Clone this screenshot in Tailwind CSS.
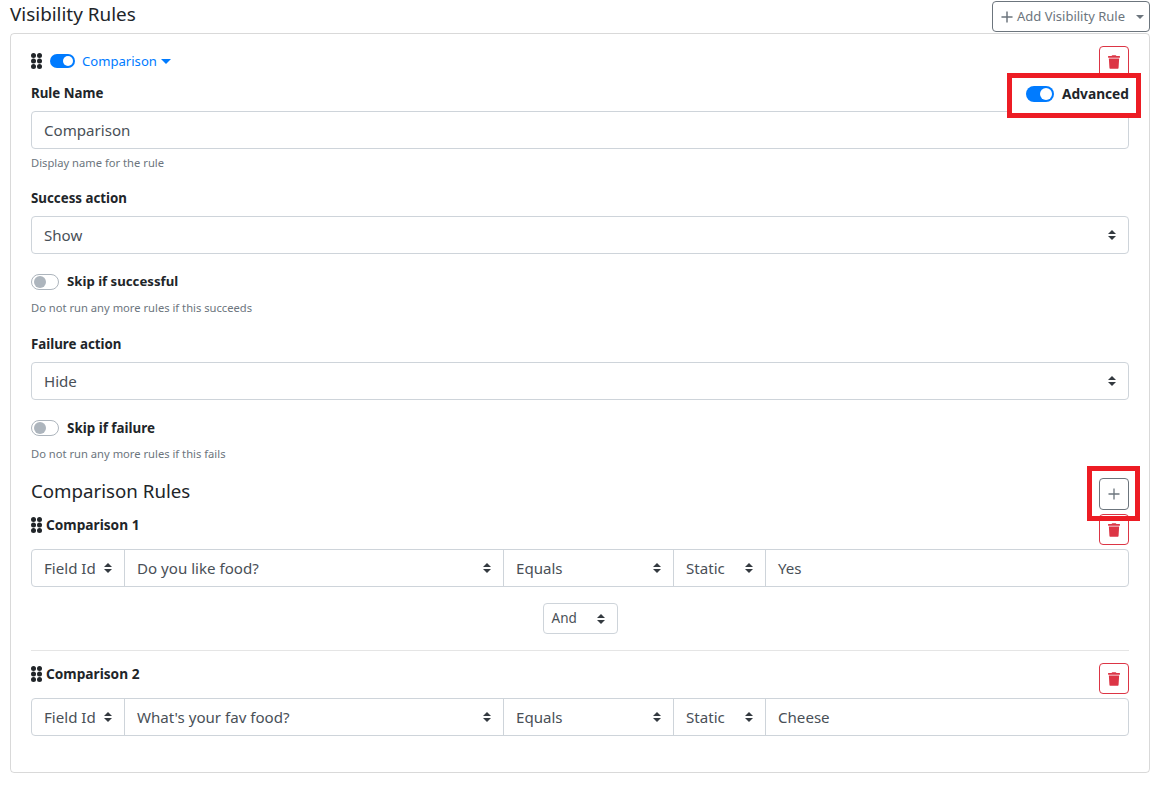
<!DOCTYPE html>
<html lang="en">
<head>
  <meta charset="UTF-8">
  <title>Visibility Rules</title>
  <script src="https://cdn.jsdelivr.net/npm/@tailwindcss/browser@4"></script>
</head>
<body class="bg-white font-['Noto_Sans',sans-serif] text-[#212529]">
  <div class="relative h-[793px] w-[1172px] overflow-hidden px-[10px] pt-[1px]">
    <!-- header -->
    <header class="flex h-[32px] w-[1140px] items-start justify-between">
      <h1 class="text-[18.9px] leading-[26px]">Visibility Rules</h1>
      <button class="flex h-[31px] w-[158px] items-center gap-[4px] rounded border border-[#6c757d] pl-[8px] text-[13px] whitespace-nowrap text-[#6c757d]">
        <svg class="h-[12px] w-[12px]" viewBox="0 0 13 13"><path d="M6.5 0.5v12M0.5 6.5h12" stroke="#6c757d" stroke-width="1.6"/></svg>
        <span>Add Visibility Rule</span>
        <span class="ml-[7px] h-0 w-0 border-x-[4px] border-t-[4.5px] border-x-transparent border-t-[#6c757d]"></span>
      </button>
    </header>

    <!-- rule card -->
    <section class="h-[740px] w-[1140px] rounded border border-black/15 px-[20px] pt-[12px]">
      <div class="flex h-[31px] items-center justify-between">
        <div class="flex items-center">
          <svg class="h-[16px] w-[11px]" viewBox="0 0 11 16" fill="#212529"><circle cx="2.5" cy="2.6" r="2.5"/><circle cx="8.5" cy="2.6" r="2.5"/><circle cx="2.5" cy="8" r="2.5"/><circle cx="8.5" cy="8" r="2.5"/><circle cx="2.5" cy="13.4" r="2.5"/><circle cx="8.5" cy="13.4" r="2.5"/></svg>
          <span class="ml-[8px] flex h-[14px] w-[25px] items-center justify-end rounded-full bg-[#007bff] pr-[2px]"><span class="h-[10px] w-[10px] rounded-full bg-white"></span></span>
          <span class="ml-[7px] text-[13.1px] text-[#007bff]">Comparison</span>
          <span class="ml-[4px] h-0 w-0 border-x-[5px] border-t-[5px] border-x-transparent border-t-[#007bff]"></span>
        </div>
        <button class="flex h-[31px] w-[30px] items-center justify-center rounded border border-[#dc3545]">
          <svg class="h-[14px] w-[12px]" viewBox="0 0 448 512" fill="#dc3545"><path d="M432 32H312l-9.4-18.7A24 24 0 0 0 281.1 0H166.8a23.72 23.72 0 0 0-21.4 13.3L136 32H16A16 16 0 0 0 0 48v32a16 16 0 0 0 16 16h416a16 16 0 0 0 16-16V48a16 16 0 0 0-16-16zM53.2 467a48 48 0 0 0 47.9 45h245.8a48 48 0 0 0 47.9-45L416 128H32z"/></svg>
        </button>
      </div>

      <label class="mt-[6px] block text-[13.3px] leading-[20px] font-bold">Rule Name</label>
      <div class="mt-[8px] flex h-[38px] items-center rounded border border-[#ced4da] px-[12px] text-[15.1px] text-[#495057]">Comparison</div>
      <p class="mt-[5px] text-[11.2px] leading-[18px] text-[#6c757d]">Display name for the rule</p>

      <label class="mt-[16px] block text-[13.3px] leading-[20px] font-bold">Success action</label>
      <div class="mt-[8px] flex h-[38px] items-center justify-between rounded border border-[#ced4da] px-[12px] text-[15.1px] text-[#495057]">
        <span>Show</span>
        <svg class="h-[10px] w-[8px]" viewBox="0 0 8 10" fill="#343a40"><path d="M4 0 8 4H0zM4 10 0 6h8z"/></svg>
      </div>
      <div class="mt-[20px] flex h-[16px] items-center">
        <span class="flex h-[16px] w-[28px] items-center rounded-full border border-[#adb5bd] pl-[2px]"><span class="h-[12px] w-[12px] rounded-full bg-[#adb5bd]"></span></span>
        <span class="ml-[8px] text-[13.2px] font-bold">Skip if successful</span>
      </div>
      <p class="mt-[9px] text-[11.2px] leading-[18px] text-[#6c757d]">Do not run any more rules if this succeeds</p>

      <label class="mt-[17px] block text-[13.3px] leading-[20px] font-bold">Failure action</label>
      <div class="mt-[8px] flex h-[38px] items-center justify-between rounded border border-[#ced4da] px-[12px] text-[15.1px] text-[#495057]">
        <span>Hide</span>
        <svg class="h-[10px] w-[8px]" viewBox="0 0 8 10" fill="#343a40"><path d="M4 0 8 4H0zM4 10 0 6h8z"/></svg>
      </div>
      <div class="mt-[20px] flex h-[16px] items-center">
        <span class="flex h-[16px] w-[28px] items-center rounded-full border border-[#adb5bd] pl-[2px]"><span class="h-[12px] w-[12px] rounded-full bg-[#adb5bd]"></span></span>
        <span class="ml-[8px] text-[13.4px] font-bold">Skip if failure</span>
      </div>
      <p class="mt-[9px] text-[11.2px] leading-[18px] text-[#6c757d]">Do not run any more rules if this fails</p>

      <!-- comparison rules -->
      <div class="mt-[15px] flex h-[32px] items-center justify-between">
        <h2 class="pb-[6px] text-[18.7px]">Comparison Rules</h2>
        <button class="flex h-[32px] w-[30px] items-center justify-center rounded border border-[#6c757d]">
          <svg class="h-[12px] w-[12px]" viewBox="0 0 12 12"><path d="M6 0.5v11M0.5 6h11" stroke="#6c757d" stroke-width="1.3"/></svg>
        </button>
      </div>

      <div class="mt-[4px] flex h-[31px] items-center justify-between">
        <div class="flex items-center pb-[8px]">
          <svg class="h-[16px] w-[11px]" viewBox="0 0 11 16" fill="#212529"><circle cx="2.5" cy="2.6" r="2.5"/><circle cx="8.5" cy="2.6" r="2.5"/><circle cx="2.5" cy="8" r="2.5"/><circle cx="8.5" cy="8" r="2.5"/><circle cx="2.5" cy="13.4" r="2.5"/><circle cx="8.5" cy="13.4" r="2.5"/></svg>
          <span class="ml-[4px] text-[13.7px] font-bold">Comparison 1</span>
        </div>
        <button class="flex h-[31px] w-[30px] items-center justify-center rounded border border-[#dc3545]">
          <svg class="h-[14px] w-[12px]" viewBox="0 0 448 512" fill="#dc3545"><path d="M432 32H312l-9.4-18.7A24 24 0 0 0 281.1 0H166.8a23.72 23.72 0 0 0-21.4 13.3L136 32H16A16 16 0 0 0 0 48v32a16 16 0 0 0 16 16h416a16 16 0 0 0 16-16V48a16 16 0 0 0-16-16zM53.2 467a48 48 0 0 0 47.9 45h245.8a48 48 0 0 0 47.9-45L416 128H32z"/></svg>
        </button>
      </div>
      <div class="mt-[4px] flex h-[38px] rounded border border-[#ced4da] text-[15.1px] text-[#495057]">
        <div class="flex w-[93px] items-center justify-between border-r border-[#ced4da] px-[12px]"><span>Field Id</span><svg class="h-[10px] w-[8px]" viewBox="0 0 8 10" fill="#343a40"><path d="M4 0 8 4H0zM4 10 0 6h8z"/></svg></div>
        <div class="flex w-[379px] items-center justify-between border-r border-[#ced4da] px-[12px]"><span>Do you like food?</span><svg class="h-[10px] w-[8px]" viewBox="0 0 8 10" fill="#343a40"><path d="M4 0 8 4H0zM4 10 0 6h8z"/></svg></div>
        <div class="flex w-[170px] items-center justify-between border-r border-[#ced4da] px-[12px]"><span>Equals</span><svg class="h-[10px] w-[8px]" viewBox="0 0 8 10" fill="#343a40"><path d="M4 0 8 4H0zM4 10 0 6h8z"/></svg></div>
        <div class="flex w-[92px] items-center justify-between border-r border-[#ced4da] px-[12px]"><span>Static</span><svg class="h-[10px] w-[8px]" viewBox="0 0 8 10" fill="#343a40"><path d="M4 0 8 4H0zM4 10 0 6h8z"/></svg></div>
        <div class="flex flex-1 items-center px-[12px]">Yes</div>
      </div>
      <div class="mt-[16px] flex justify-center">
        <div class="flex h-[31px] w-[75px] items-center justify-between rounded border border-[#ced4da] pr-[12px] pl-[8px] text-[13.5px] text-[#495057]"><span>And</span><svg class="h-[10px] w-[8px]" viewBox="0 0 8 10" fill="#343a40"><path d="M4 0 8 4H0zM4 10 0 6h8z"/></svg></div>
      </div>
      <hr class="mt-[16px] border-black/10">

      <div class="mt-[12px] flex h-[31px] items-center justify-between">
        <div class="flex items-center pb-[8px]">
          <svg class="h-[16px] w-[11px]" viewBox="0 0 11 16" fill="#212529"><circle cx="2.5" cy="2.6" r="2.5"/><circle cx="8.5" cy="2.6" r="2.5"/><circle cx="2.5" cy="8" r="2.5"/><circle cx="8.5" cy="8" r="2.5"/><circle cx="2.5" cy="13.4" r="2.5"/><circle cx="8.5" cy="13.4" r="2.5"/></svg>
          <span class="ml-[4px] text-[13.7px] font-bold">Comparison 2</span>
        </div>
        <button class="flex h-[31px] w-[30px] items-center justify-center rounded border border-[#dc3545]">
          <svg class="h-[14px] w-[12px]" viewBox="0 0 448 512" fill="#dc3545"><path d="M432 32H312l-9.4-18.7A24 24 0 0 0 281.1 0H166.8a23.72 23.72 0 0 0-21.4 13.3L136 32H16A16 16 0 0 0 0 48v32a16 16 0 0 0 16 16h416a16 16 0 0 0 16-16V48a16 16 0 0 0-16-16zM53.2 467a48 48 0 0 0 47.9 45h245.8a48 48 0 0 0 47.9-45L416 128H32z"/></svg>
        </button>
      </div>
      <div class="mt-[4px] flex h-[38px] rounded border border-[#ced4da] text-[15.1px] text-[#495057]">
        <div class="flex w-[93px] items-center justify-between border-r border-[#ced4da] px-[12px]"><span>Field Id</span><svg class="h-[10px] w-[8px]" viewBox="0 0 8 10" fill="#343a40"><path d="M4 0 8 4H0zM4 10 0 6h8z"/></svg></div>
        <div class="flex w-[379px] items-center justify-between border-r border-[#ced4da] px-[12px]"><span>What's your fav food?</span><svg class="h-[10px] w-[8px]" viewBox="0 0 8 10" fill="#343a40"><path d="M4 0 8 4H0zM4 10 0 6h8z"/></svg></div>
        <div class="flex w-[170px] items-center justify-between border-r border-[#ced4da] px-[12px]"><span>Equals</span><svg class="h-[10px] w-[8px]" viewBox="0 0 8 10" fill="#343a40"><path d="M4 0 8 4H0zM4 10 0 6h8z"/></svg></div>
        <div class="flex w-[92px] items-center justify-between border-r border-[#ced4da] px-[12px]"><span>Static</span><svg class="h-[10px] w-[8px]" viewBox="0 0 8 10" fill="#343a40"><path d="M4 0 8 4H0zM4 10 0 6h8z"/></svg></div>
        <div class="flex flex-1 items-center px-[12px]">Cheese</div>
      </div>
    </section>

    <!-- red callouts over the page -->
    <div class="absolute top-[73px] left-[1007px] flex h-[45px] w-[134px] items-center border-[5px] border-[#ed1c24] bg-white pb-[3px] pl-[14px]">
      <span class="flex h-[16px] w-[28px] items-center justify-end rounded-full bg-[#007bff] pr-[2px]"><span class="h-[12px] w-[12px] rounded-full bg-white"></span></span>
      <span class="ml-[8px] text-[13.7px] font-bold">Advanced</span>
    </div>
    <div class="absolute top-[466px] left-[1087px] h-[55px] w-[53px] border-[5px] border-[#ed1c24]"></div>
  </div>
</body>
</html>
